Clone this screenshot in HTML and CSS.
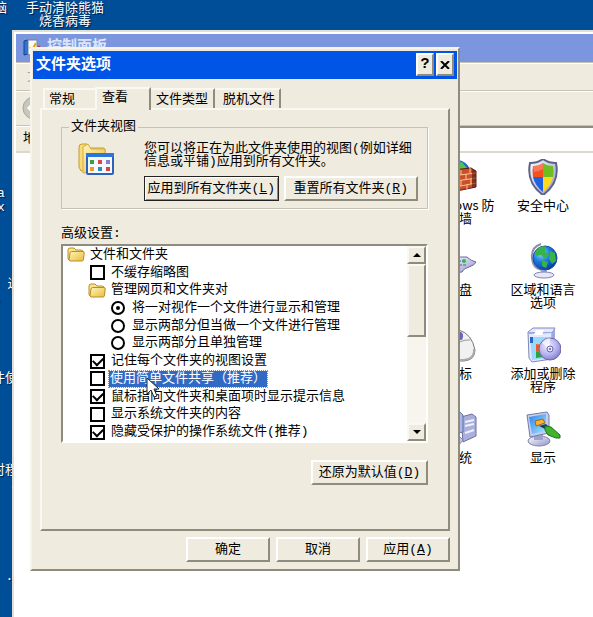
FILE: index.html
```html
<!DOCTYPE html>
<html lang="zh-CN">
<head>
<meta charset="utf-8">
<title>文件夹选项</title>
<link rel="stylesheet" href="styles.css">
</head>
<body>
<svg class="defs" aria-hidden="true">
  <defs>
    <linearGradient id="fold" x1="0" y1="0" x2="1" y2="1"><stop offset="0" stop-color="#fff6b8"/><stop offset="1" stop-color="#e8bb3c"/></linearGradient>
    <linearGradient id="metal" x1="0" y1="0" x2="1" y2="1"><stop offset="0" stop-color="#ffffff"/><stop offset="1" stop-color="#8f93c8"/></linearGradient>
    <linearGradient id="screen" x1="0" y1="0" x2="1" y2="1"><stop offset="0" stop-color="#2f83ee"/><stop offset="1" stop-color="#a5e8ff"/></linearGradient>
    <radialGradient id="sea" cx=".35" cy=".3" r=".8"><stop offset="0" stop-color="#8fdcff"/><stop offset=".45" stop-color="#1b7be2"/><stop offset="1" stop-color="#0a2f9a"/></radialGradient>
    <radialGradient id="disc" cx=".4" cy=".35" r=".7"><stop offset="0" stop-color="#f4f2ff"/><stop offset=".6" stop-color="#b5b0f0"/><stop offset="1" stop-color="#7e7cc8"/></radialGradient>
    <symbol id="folder" viewBox="0 0 18 15">
      <path d="M1 12V3q0-2 2-2h4l2 2h5q2 0 2 2v8H2z" fill="#f9e48c" stroke="#b98d25"/>
      <path d="M2 13 3 6q.3-1.500 1.500-1.500h11.500q1.300 0 1.200 1.500l-.7 6.500q-.2 1.500-1.700 1.500H3z" fill="url(#fold)" stroke="#b98d25"/>
    </symbol>
  </defs>
</svg>
<main class="desktop">
  <div class="desktop-icon pos-computer">脑</div>
  <div class="desktop-icon pos-panda">手动清除熊猫<br>烧香病毒</div>
  <div class="desktop-icon pos-a">a<br>x</div>
  <div class="desktop-icon pos-b">" 过<br>. .</div>
  <div class="desktop-icon pos-c">件使</div>
  <div class="desktop-icon pos-d">时程<br>. .</div>
  <div class="desktop-icon pos-e">. .</div>

  <section class="panel-window" aria-label="控制面板">
    <header class="panel-title">
      <svg width="18" height="18" viewBox="0 0 18 18"><path d="M1 2l4-1v14l-4 1z" fill="#2e77cf" stroke="#15428f"/><path d="M5 1h9v13l-9 2z" fill="#fffdf0" stroke="#6d83ad"/><path d="M7 8l2 3 4-7" fill="none" stroke="#e0a321" stroke-width="2"/><circle cx="16" cy="8" r="1.500" fill="#c43d3d"/></svg>
      <span>控制面板</span>
    </header>
    <div class="menu-row">文件</div>
    <div class="tool-row"><svg width="24" height="24" viewBox="0 0 24 24"><circle cx="12" cy="12" r="11" fill="#c9c7bd" stroke="#a7a59c"/><path d="M13 6l-6 6 6 6M7 12h11" fill="none" stroke="#fff" stroke-width="3"/></svg></div>
    <div class="address-row"><label for="addr">地址</label><input id="addr" type="text"></div>
    <div class="items">
      <div class="item"><svg width="36" height="36" viewBox="0 0 36 36"><circle cx="16" cy="14" r="13" fill="url(#sea)"/><path d="M12 6l9-3 5 6-8 4z" fill="#55c248"/><path d="M2 12l28-3 5 3v16L6 34l-4-4z" fill="#c9502a" stroke="#5e1d10"/><path d="M2 18l33-4M2 24l33-5M4 30l31-6M11 12v5M20 11v5M29 9v5M15 17v5M25 15v6M11 23v5M20 21v6M30 20v5M16 28v4M26 26v4" stroke="#ffc492" fill="none"/><path d="M31 10l4 2v16l-4 1z" fill="#571a10" opacity=".6"/></svg><span>Windows 防<br>火墙</span></div>
      <div class="item"><svg width="36" height="36" viewBox="0 0 36 36"><path d="M18 0q5 4 13 4 4 20-13 32Q1 24 5 4q8 0 13-4z" fill="url(#metal)" stroke="#5d6384" stroke-width="2"/><path d="M18 4q-4 3-10 3-1 5 0 11h10z" fill="#f4511e"/><path d="M18 4q4 3 10 3 1 5 0 11H18z" fill="#6fbe21"/><path d="M8 18q2 9 10 15V18z" fill="#1f62df"/><path d="M28 18q-2 9-10 15V18z" fill="#ffd91c"/><path d="M8 7q6 0 10-3v6q-5 3-9 3z" fill="#fff" opacity=".25"/></svg><span>安全中心</span></div>
      <div class="item"><svg width="36" height="36" viewBox="0 0 36 36"><path d="M2 14l24 0q4 4 9 5-1 3-7 5-5 1-7 5L4 31z" fill="url(#metal)" stroke="#6867a8"/><path d="M5 18h20M6 22h20M8 26h12" stroke="#8f8ccf" stroke-width="2" stroke-dasharray="3 1"/><circle cx="23" cy="18" r="2" fill="#30bd3b"/></svg><span>键盘</span></div>
      <div class="item"><svg width="36" height="36" viewBox="0 0 36 36"><path d="M16 1q-10 3-9 14 1 12 12 12" fill="none" stroke="#8b8eae" stroke-width="2"/><path d="M16 27h6v4h-6z" fill="#a6a9ce"/><ellipse cx="19" cy="32" rx="10" ry="3" fill="#e7e7fa" stroke="#8487ac"/><circle cx="20" cy="15" r="12" fill="url(#sea)" stroke="#17539d"/><path d="M13 5q5-3 8-1l-1 5 4 2-4 5-4-4-5 1q-1-5 2-8zM25 8l5 2 1 8-4 3-3-5zM17 17l6 2-2 6-4-2z" fill="#38b34a"/></svg><span>区域和语言<br>选项</span></div>
      <div class="item"><svg width="36" height="36" viewBox="0 0 36 36"><path d="M18 3q13 4 16 20 0 10-11 11-13 1-19-8Q2 6 18 3z" fill="#f1f1f1" stroke="#777"/><path d="M9 22q10-10 20-9M19 5l2 8" fill="none" stroke="#999"/><ellipse cx="19" cy="9" rx="3" ry="4" fill="#6562bb"/><path d="M33 22q1 12-16 11" stroke="#aaa" stroke-width="2" fill="none"/></svg><span>鼠标</span></div>
      <div class="item"><svg width="36" height="36" viewBox="0 0 36 36"><path d="M3 5l5-4h22l-3 5v26l-20 3-3-4z" fill="#e5e9ff" stroke="#8386b6"/><path d="M3 5h24l3-4v28l-3 3V6L4 7z" fill="#9aa9df"/><path d="M11 3h8l-2 5h-8z" fill="#fff"/><path d="M5 10h20v21l-18 2z" fill="#9ad9ff"/><path d="M5 10h3v6H5z" fill="#1f6ac9"/><path d="M11 17l6 1v6l-6 1z" fill="#ef5829"/><path d="M11 25l7-1v6l-7 1z" fill="#2ea23b"/><circle cx="25" cy="22" r="11" fill="url(#disc)" stroke="#6b6aa6"/><path d="M25 22l-8-6q3-5 8-5z" fill="#fff" opacity=".6"/><circle cx="25" cy="22" r="3" fill="#e9e8ff" stroke="#6866ae"/><circle cx="25" cy="22" r="1" fill="#62609c"/></svg><span>添加或删除<br>程序</span></div>
      <div class="item"><svg width="36" height="36" viewBox="0 0 36 36"><path d="M20 6l11-3 4 3v19l-13 6z" fill="#aab0dc" stroke="#6c70a1"/><path d="M24 11l9-2M24 15l9-2M24 22l9-3" stroke="#eef0ff" stroke-width="2"/><path d="M2 3l17-2 3 3v17L5 24l-3-3z" fill="#aab6e8" stroke="#646f9f"/><path d="M4 5l14-2v15L5 20z" fill="url(#screen)"/><path d="M8 23h8l6 6-4 5H5l-2-4z" fill="#c4c8ed" stroke="#8588b4"/></svg><span>系统</span></div>
      <div class="item"><svg width="36" height="36" viewBox="0 0 36 36"><ellipse cx="14" cy="30" rx="11" ry="5" fill="url(#metal)" stroke="#7d82ad"/><path d="M9 23h9v6H9z" fill="#9da3cf"/><path d="M2 4l20-3 2 3v18L5 26z" fill="#c7cdee" stroke="#717baa"/><path d="M4 6l17-3v17L7 23z" fill="url(#screen)"/><path d="M10 10l8-2 2 4-9 3z" fill="#f7b233" stroke="#a7660d"/><path d="M14 15l7-2 3 3-4 2z" fill="#26365a"/><path d="M20 15l6 1 9 8v3l-4 0-8-3-3-5z" fill="#41b22f" stroke="#16781b"/></svg><span>显示</span></div>
    </div>
  </section>

  <section class="dialog" role="dialog" aria-labelledby="dlg-title">
    <header class="title-bar">
      <h1 id="dlg-title">文件夹选项</h1>
      <button class="cap" type="button" aria-label="帮助">?</button>
      <button class="cap" type="button" aria-label="关闭"><svg width="10" height="8" viewBox="0 0 10 8"><path d="M1 0l8 8M9 0L1 8" stroke="#000" stroke-width="2"/></svg></button>
    </header>
    <nav class="tabs" role="tablist">
      <button class="tab first" type="button" role="tab">常规</button>
      <button class="tab active" type="button" role="tab" aria-selected="true">查看</button>
      <button class="tab" type="button" role="tab">文件类型</button>
      <button class="tab last" type="button" role="tab">脱机文件</button>
    </nav>
    <div class="page">
      <fieldset class="views">
        <legend>文件夹视图</legend>
        <svg width="36" height="33" viewBox="0 0 36 33"><path d="M1 25V5q0-3 3-3h5l3 4h13q2 0 2 2v18L3 29z" fill="#f7dc78" stroke="#c49b31"/><path d="M5 5l5-3 3 5h14v22l-22 2z" fill="url(#fold)" stroke="#d3ac49"/><rect x="9" y="12" width="26" height="20" rx="1" fill="#f6f8ff" stroke="#2e62b8" stroke-width="2"/><path d="M8 11h28v4H8z" fill="#2d75dc"/><path d="M12 18h4v4h-4z" fill="#35a136"/><path d="M20 18h4v4h-4z" fill="#d94949"/><path d="M28 18h4v4h-4z" fill="#8b7bd1"/><path d="M12 25h4v4h-4z" fill="#f39a23"/><path d="M20 25h4v4h-4z" fill="#258fc4"/><path d="M28 25h4v4h-4z" fill="#d4463b"/></svg>
        <div class="views-body">
          <p>您可以将正在为此文件夹使用的视图(例如详细<br>信息或平铺)应用到所有文件夹。</p>
          <div class="pair">
            <button class="btn default" type="button">应用到所有文件夹(<u>L</u>)</button>
            <button class="btn" type="button">重置所有文件夹(<u>R</u>)</button>
          </div>
        </div>
      </fieldset>
      <div class="adv-label" id="adv">高级设置:</div>
      <div class="listbox" role="group" aria-labelledby="adv">
        <div class="rows">
          <div class="row"><svg width="18" height="15"><use href="#folder"/></svg><span>文件和文件夹</span></div>
          <label class="row l1"><input type="checkbox"><span>不缓存缩略图</span></label>
          <div class="row l1"><svg width="18" height="15"><use href="#folder"/></svg><span>管理网页和文件夹对</span></div>
          <label class="row l2"><input type="radio" name="pair" checked><span>将一对视作一个文件进行显示和管理</span></label>
          <label class="row l2"><input type="radio" name="pair"><span>显示两部分但当做一个文件进行管理</span></label>
          <label class="row l2"><input type="radio" name="pair"><span>显示两部分且单独管理</span></label>
          <label class="row l1"><input type="checkbox" checked><span>记住每个文件夹的视图设置</span></label>
          <label class="row l1 selected"><input type="checkbox"><span>使用简单文件共享（推荐）</span></label>
          <label class="row l1"><input type="checkbox" checked><span>鼠标指向文件夹和桌面项时显示提示信息</span></label>
          <label class="row l1"><input type="checkbox"><span>显示系统文件夹的内容</span></label>
          <label class="row l1"><input type="checkbox" checked><span>隐藏受保护的操作系统文件(推荐)</span></label>
        </div>
        <div class="scroll">
          <button type="button" aria-label="向上"><svg width="8" height="4" viewBox="0 0 8 4"><path d="M0 4l4-4 4 4z"/></svg></button>
          <div class="thumb"></div>
          <button class="down" type="button" aria-label="向下"><svg width="8" height="4" viewBox="0 0 8 4"><path d="M0 0l4 4 4-4z"/></svg></button>
        </div>
        <svg class="pointer" width="14" height="22" viewBox="0 0 14 22"><path d="M1 1v16l4-4 3 7 3-1-3-7h5z" fill="#fff" stroke="#222"/></svg>
      </div>
      <button class="btn restore" type="button">还原为默认值(<u>D</u>)</button>
    </div>
    <footer class="actions">
      <button class="btn" type="button">确定</button>
      <button class="btn" type="button">取消</button>
      <button class="btn" type="button">应用(<u>A</u>)</button>
    </footer>
  </section>
</main>
</body>
</html>
```

FILE: styles.css
```css
:root {
  --face: #efebde;
  --shade: #8f8b7d;
  --line: #c6c3b6;
}
* { box-sizing: border-box; }
body {
  margin: 0;
  font: 13px/16px "Liberation Mono", "Noto Sans CJK SC", monospace;
  color: #000;
}
button, input { font: inherit; color: inherit; margin: 0; }
svg { display: block; flex: none; }
.defs { position: absolute; width: 0; height: 0; }
.desktop {
  position: relative;
  height: 100vh;
  overflow: hidden;
  background: #004e98;
}

/* Desktop shortcuts, freely placed */
.desktop-icon {
  position: absolute;
  color: #fff;
  line-height: 13px;
  text-align: center;
  white-space: nowrap;
  text-shadow: 1px 1px 1px #001a40;
}
.pos-computer { left: -6px; top: 2px; }
.pos-panda { left: 26px; top: 2px; }
.pos-a { left: -3px; top: 187px; line-height: 14px; }
.pos-b { left: -16px; top: 278px; line-height: 14px; }
.pos-b { left: -8px; }
.pos-c { left: -8px; top: 372px; }
.pos-d { left: -8px; top: 464px; line-height: 14px; }
.pos-e { left: -10px; top: 570px; }

/* Window behind the dialog */
.panel-window {
  position: absolute;
  inset: 30px 0 0 12px;
  display: flex;
  flex-direction: column;
  border: solid #e2dfd4;
  border-width: 2px 0 0 2px;
  box-shadow: inset 1px 1px #fff;
  padding: 2px 0 0 2px;
  background: #fff;
}
.panel-title {
  display: flex;
  align-items: center;
  gap: 6px;
  height: 28px;
  padding-left: 7px;
  background: #7b96df;
  color: #dbe4fa;
  font-size: 15px;
  font-weight: bold;
}
.menu-row, .tool-row, .address-row {
  display: flex;
  align-items: center;
  background: var(--face);
  border-top: 1px solid var(--line);
  box-shadow: inset 0 1px #fff;
}
.menu-row { height: 28px; padding-left: 11px; color: #aaa79c; }
.tool-row { height: 35px; padding-left: 6px; }
.address-row { height: 28px; padding-left: 7px; gap: 4px; border-bottom: 2px solid #dcd8cb; }
.address-row input {
  flex: 1;
  align-self: stretch;
  border: 0;
  border-top: 2px solid var(--shade);
  background: #fff;
}
.items {
  display: grid;
  grid-template-columns: 84px 84px;
  grid-auto-rows: 84px;
  justify-content: end;
  padding: 6px 8px 0 0;
}
.item {
  display: flex;
  flex-direction: column;
  align-items: center;
  gap: 3px;
  font-family: "Noto Sans CJK SC", sans-serif;
  line-height: 13px;
  text-align: center;
  white-space: nowrap;
}

/* Dialog */
.dialog {
  position: absolute;
  left: 30px;
  right: 133px;
  top: 47px;
  padding: 2px 1px 7px;
  border: 2px solid;
  border-color: #f6f4ec var(--shade) var(--shade) #f6f4ec;
  background: var(--face);
}
.title-bar {
  display: flex;
  align-items: center;
  gap: 2px;
  height: 28px;
  padding: 0 3px 1px;
  background: #0054e6;
  color: #fff;
}
.title-bar h1 { flex: 1; margin: 0; padding-top: 3px; font-size: 15px; line-height: 20px; }
.cap {
  display: grid;
  place-items: center;
  width: 18px;
  height: 23px;
  padding: 0;
  border: 2px solid;
  border-color: #fff var(--shade) var(--shade) #fff;
  background: var(--face);
  color: #000;
  font-size: 15px;
  font-weight: bold;
}
.tabs { display: flex; align-items: flex-end; height: 29px; padding-left: 10px; }
.tab {
  height: 20px;
  padding: 1px 4px 0;
  border: 0;
  border-top: 2px solid #faf8f2;
  border-right: 2px solid var(--shade);
  background: var(--face);
}
.tab.first { width: 52px; border-left: 2px solid #faf8f2; border-right: 0; text-align: left; }
.tab.active {
  position: relative;
  width: 56px;
  height: 23px;
  margin-bottom: -2px;
  padding: 0 5px 3px;
  border-left: 2px solid #faf8f2;
  text-align: left;
}
.tab:not(.first):not(.active) { min-width: 64px; }
.tab.last { padding-left: 8px; }
.page {
  display: flex;
  flex-direction: column;
  margin: 0 7px;
  padding: 9px 20px 44px 19px;
  border: 2px solid;
  border-color: #faf8f2 var(--shade) var(--shade) #faf8f2;
}
.views {
  display: flex;
  gap: 30px;
  min-width: 0;
  margin: 0;
  padding: 7px 9px 7px 16px;
  border: 1px solid var(--line);
  box-shadow: 1px 1px #fff;
}
.views legend { margin-left: -9px; padding: 0 2px; }
.views-body { flex: 1; }
.views p { margin: 0 0 8px; line-height: 13px; white-space: nowrap; }
.pair { display: grid; grid-template-columns: 1fr 1fr; gap: 5px; }
.btn {
  height: 25px;
  padding: 0 2px;
  border: 2px solid;
  border-color: #fff var(--shade) var(--shade) #fff;
  background: var(--face);
  white-space: nowrap;
}
.btn.default { border: 1px solid #222; box-shadow: inset 1px 1px #fff, inset -1px -1px var(--shade); }
.adv-label { margin: 17px 0 2px; }
.listbox {
  position: relative;
  display: flex;
  height: 199px;
  border: 2px solid;
  border-color: var(--shade) #fff #fff var(--shade);
  background: #fff;
}
.rows { flex: 1; display: grid; grid-auto-rows: 1fr; min-width: 0; padding-left: 4px; }
.row { display: flex; align-items: center; gap: 5px; min-height: 0; white-space: nowrap; }
.row span { line-height: 16px; }
.l1 { padding-left: 21px; }
.l2 { padding-left: 44px; }
label.l1 { padding-left: 23px; }
.row input {
  appearance: none;
  display: grid;
  place-items: center;
  width: 15px;
  height: 15px;
  border: 2px solid #000;
  background: #fff;
}
.row input[type="radio"] { width: 14px; height: 14px; border-radius: 50%; margin-right: 2px; }
.row input[type="radio"]:checked::before {
  content: "";
  width: 4px;
  height: 4px;
  border-radius: 50%;
  background: #000;
}
.row input[type="checkbox"]:checked::before {
  content: "";
  width: 8px;
  height: 5px;
  border: solid #000;
  border-width: 0 0 2px 2px;
  transform: translateY(-1px) rotate(-45deg);
}
.row input[type="checkbox"] { margin-right: 1px; }
.selected span {
  margin-left: -2px;
  padding: 0 1px;
  outline: 1px dotted #b58a42;
  background: #316ac5;
  color: #fff;
}
.scroll { display: flex; flex-direction: column; width: 19px; background: #f7f5ee; }
.scroll button, .thumb {
  display: grid;
  place-items: center;
  height: 18px;
  padding: 0;
  border: 2px solid;
  border-color: #faf8f2 var(--shade) var(--shade) #faf8f2;
  background: var(--face);
}
.thumb { height: 73px; }
.scroll .down { margin-top: auto; }
.pointer { position: absolute; left: 83px; top: 131px; }
.restore { align-self: flex-end; width: 117px; margin-top: 17px; }
.actions { display: flex; justify-content: flex-end; gap: 6px; margin: 6px 7px 0; }
.actions .btn { width: 84px; }
```
